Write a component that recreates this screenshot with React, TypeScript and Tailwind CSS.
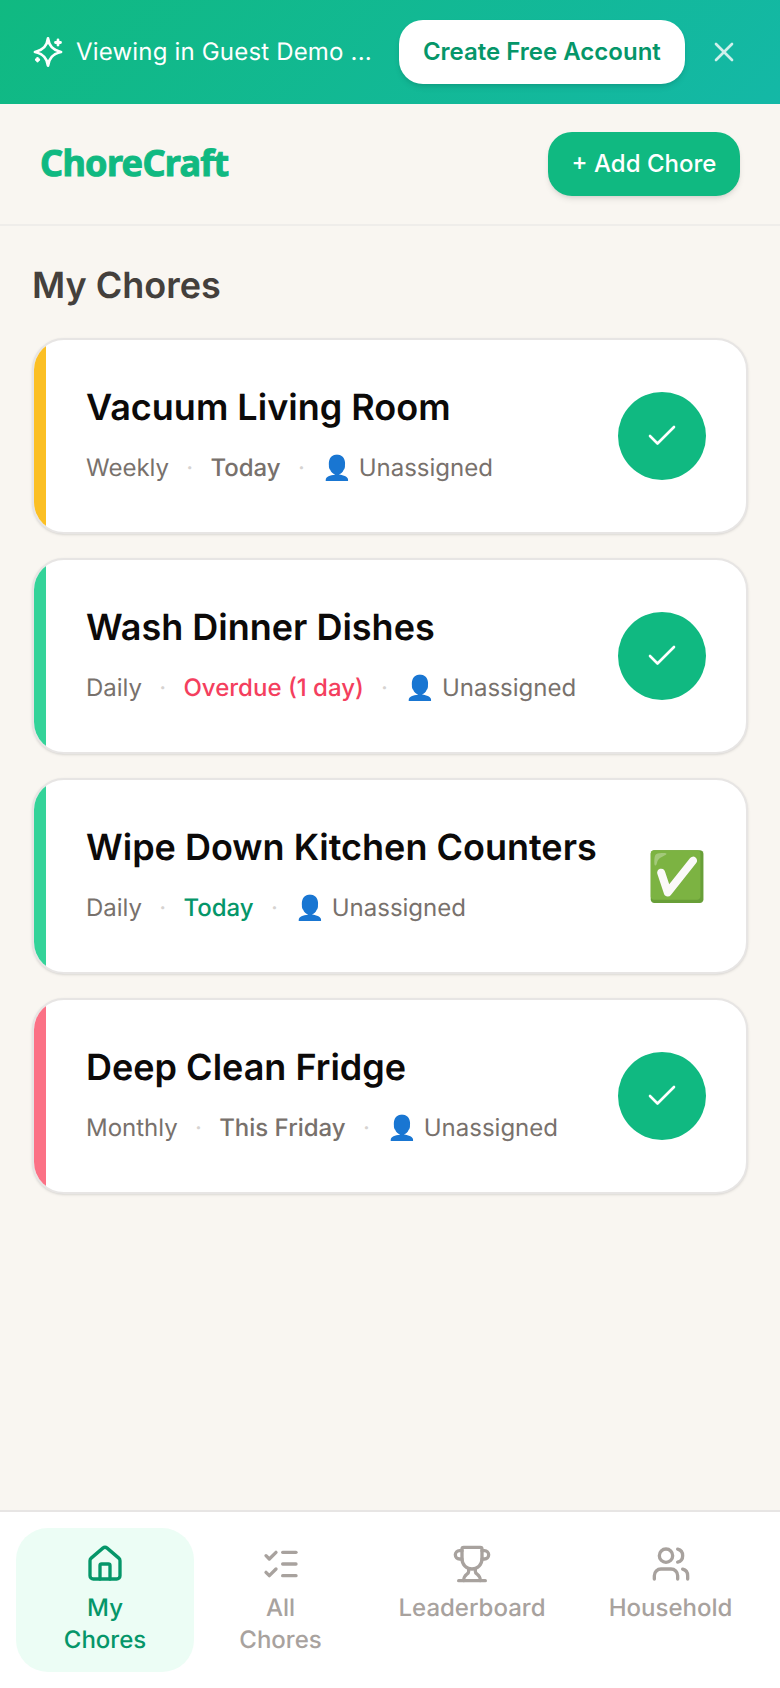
import { Check, House, ListChecks, Trophy, Users, X } from "lucide-react";

const chores = [
    { name: "Vacuum Living Room", freq: "Weekly", due: "Today", dueClass: "text-[#78716c] font-medium", bar: "bg-[#fbbf24]", done: false },
    { name: "Wash Dinner Dishes", freq: "Daily", due: "Overdue (1 day)", dueClass: "text-[#f43f5e] font-medium", bar: "bg-[#34d399]", done: false },
    { name: "Wipe Down Kitchen Counters", freq: "Daily", due: "Today", dueClass: "text-[#059669] font-medium", bar: "bg-[#34d399]", done: true },
    { name: "Deep Clean Fridge", freq: "Monthly", due: "This Friday", dueClass: "text-[#78716c] font-medium", bar: "bg-[#fb7185]", done: false },
];

const tabs = [
    { label: "My Chores", Icon: House, active: true, width: "w-[178px]", textClass: "w-[100px]" },
    { label: "All Chores", Icon: ListChecks, active: false, width: "w-[173px]", textClass: "w-[100px]" },
    { label: "Leaderboard", Icon: Trophy, active: false, width: "w-[210px]", textClass: "whitespace-nowrap" },
    { label: "Household", Icon: Users, active: false, width: "w-[187px]", textClass: "whitespace-nowrap" },
];

const Dot = () => <span className="text-[#d6d3d1] text-[24px] mx-[17.25px]">·</span>;

const Sparkle = () => (
    <svg width="32" height="32" viewBox="0 0 32 32" fill="none" stroke="currentColor" strokeWidth="2.8" strokeLinecap="round" strokeLinejoin="round" className="shrink-0">
        <path d="M16 2.500c1 7.500 4.500 11.500 13 13.500-8.500 2-12 6-13 13.500-1-7.500-4.500-11.500-13-13.500 8.500-2 12-6 13-13.500z" />
        <path d="M26 4v5M23.500 6.500h5" />
        <path d="M5.500 22.500v2.500M4.300 23.700h2.500" />
    </svg>
);

const App = () => {
    return (
        <div className="h-[1688px] flex flex-col bg-[#f9f6f1] font-['Inter',sans-serif] [text-rendering:geometricPrecision]">
            {/* guest banner */}
            <div className="h-[104px] shrink-0 flex items-center pl-[32px] pr-[40px] bg-[linear-gradient(135deg,#10b981,#14b8a6)] text-white">
                <Sparkle />
                <span className="ml-[12px] text-[24px] leading-[32px] tracking-[0.18px] whitespace-nowrap">Viewing in Guest Demo ...</span>
                <button className="ml-[27px] h-[64px] w-[286px] rounded-[24px] bg-white text-[#059669] text-[24px] font-semibold shadow-md">
                    Create Free Account
                </button>
                <X size={32} strokeWidth={2} className="ml-auto opacity-80" />
            </div>

            {/* header */}
            <div className="h-[122px] shrink-0 flex items-center justify-between px-[40px] border-b-2 border-[#efedea]">
                <span className="mb-[3px] font-['Noto_Sans',sans-serif] font-bold text-[36px] tracking-[-0.7px] text-[#10b981] [-webkit-text-stroke:1px_#10b981] [stroke-linejoin:round]">ChoreCraft</span>
                <button className="h-[64px] w-[192px] rounded-[24px] bg-[#10b981] text-white text-[24px] font-medium shadow-md">
                    + Add Chore
                </button>
            </div>

            <main className="flex-1 px-[32px] pt-[37px]">
                <h1 className="text-[36px] leading-[44px] font-semibold text-[#44403c] mb-[31px]">My Chores</h1>
                <div className="flex flex-col gap-[24px]">
                    {chores.map((c) => (
                        <div key={c.name} className="h-[196px] flex rounded-[32px] overflow-hidden bg-white border-2 border-[#e7e5e4] shadow-sm">
                            <div className={`w-[12px] shrink-0 ${c.bar}`} />
                            <div className="flex-1 flex items-center justify-between pl-[40px] pr-[40px]">
                                <div className="mb-[5px]">
                                    <div className="text-[36px] leading-[48px] font-semibold text-[#0c0a09]">{c.name}</div>
                                    <div className="mt-[21px] flex items-center text-[24px] leading-[32px] text-[#78716c]">
                                        <span>{c.freq}</span>
                                        <Dot />
                                        <span className={c.dueClass}>{c.due}</span>
                                        <Dot />
                                        <span>👤 Unassigned</span>
                                    </div>
                                </div>
                                {c.done ? (
                                    <span className="text-[48px] leading-none mr-[-1px]">✅</span>
                                ) : (
                                    <div className="w-[88px] h-[88px] rounded-full bg-[#10b981] flex items-center justify-center text-white">
                                        <Check size={36} strokeWidth={1.75} />
                                    </div>
                                )}
                            </div>
                        </div>
                    ))}
                </div>
            </main>

            {/* bottom tabs */}
            <nav className="h-[178px] shrink-0 bg-white border-t-2 border-[#e7e5e4] flex items-start px-[16px] pt-[16px]">
                {tabs.map(({ label, Icon, active, width, textClass }) => (
                    <div
                        key={label}
                        className={`${width} h-[144px] rounded-[32px] flex flex-col items-center pt-[16px] text-[24px] leading-[32px] font-medium text-center ${active ? "bg-[#ecfdf5] text-[#059669]" : "text-[#a8a29e]"}`}
                    >
                        <Icon size={40} strokeWidth={2} />
                        <span className={`mt-[8px] ${textClass}`}>{label}</span>
                    </div>
                ))}
            </nav>
        </div>
    );
};

export default App;
